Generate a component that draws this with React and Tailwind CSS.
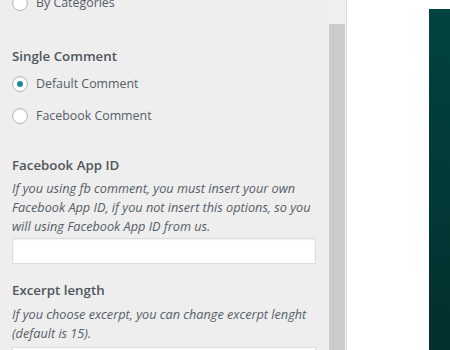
import React from 'react';

const Radio = ({ label, checked }) => (
  <label className="flex items-center gap-[8px] h-[32px]">
    <span className="w-[16px] h-[16px] rounded-full border border-[#b4b9be] bg-white flex items-center justify-center shadow-[inset_0_1px_2px_rgba(0,0,0,0.1)]">
      {checked && <span className="w-[6px] h-[6px] rounded-full bg-[#1f8a9e]" />}
    </span>
    <span className="text-[12.4px] text-[#555d66]">{label}</span>
  </label>
);

const Title = ({ children }) => (
  <div className="text-[13.3px] font-semibold text-[#50555b] leading-[24px]">{children}</div>
);

const Desc = ({ children }) => (
  <p className="text-[12.7px] italic text-[#555d66] leading-[19px]">{children}</p>
);

export default function App() {
  return (
    <div className="flex h-[350px] w-[450px] overflow-hidden bg-white" style={{ fontFamily: '"Open Sans", "Noto Sans", sans-serif' }}>
      <div className="w-[328px] bg-[#eeeeee] px-[12px] overflow-hidden">
        <div className="-mt-[13px]">
          <Radio label="By Categories" />
        </div>
        <div className="mt-[25px]">
          <Title>Single Comment</Title>
          <div>
            <Radio label="Default Comment" checked />
            <Radio label="Facebook Comment" />
          </div>
        </div>
        <div className="mt-[21px]">
          <Title>Facebook App ID</Title>
          <div className="mt-[2px]">
            <Desc>
              If you using fb comment, you must insert your own Facebook App ID, if you not insert this options, so you will using Facebook App ID from us.
            </Desc>
          </div>
          <div className="mt-[2px] h-[26px] bg-white border border-[#dddddd] shadow-[inset_0_1px_2px_rgba(0,0,0,0.07)]" />
        </div>
        <div className="mt-[14px]">
          <Title>Excerpt length</Title>
          <div className="mt-[3px]">
            <Desc>If you choose excerpt, you can change excerpt lenght (default is 15).</Desc>
          </div>
          <div className="mt-[4px] h-[26px] bg-white border border-[#dddddd]" />
        </div>
      </div>
      <div className="w-[19px] bg-[#f0f0f0] border-r border-[#dcdcdc] flex flex-col pl-[1px] pr-[1px]">
        <div className="h-[24px]" />
        <div className="flex-1 bg-[#cccccc] flex">
          <div className="w-[5px] border-r border-[#c4c4c4]" />
        </div>
      </div>
      <div className="flex-1 flex justify-end pt-[9px]">
        <div className="w-[21px] bg-gradient-to-b from-[#03433f] to-[#02302e]" />
      </div>
    </div>
  );
}
